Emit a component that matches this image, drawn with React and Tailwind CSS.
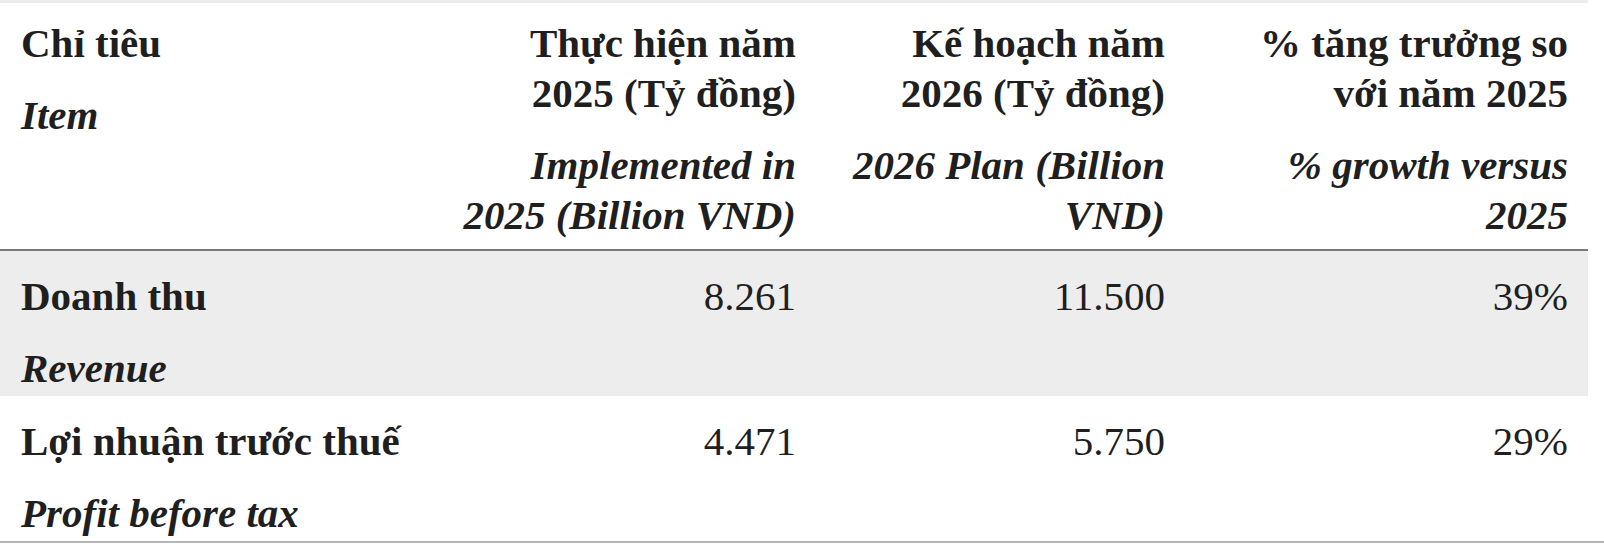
export default function App() {
  const rows = [
    { vi: 'Doanh thu', en: 'Revenue', a: '8.261', b: '11.500', c: '39%', shaded: true },
    { vi: 'Lợi nhuận trước thuế', en: 'Profit before tax', a: '4.471', b: '5.750', c: '29%', shaded: false },
  ];

  const cols = 'grid grid-cols-[420px_396px_369px_403px]';

  return (
    <div
      className="w-[1604px] h-[544px] bg-white text-[#1f1f1f] text-[41px] leading-[50px] overflow-hidden"
      style={{ fontFamily: '"Liberation Serif", "Times New Roman", serif' }}
    >
      <div className="w-[1588px] border-t-[3px] border-[#ececec]">
        {/* header */}
        <div className={`${cols} border-b-2 border-[#7a7a7a] pt-[15px] pb-[9px]`}>
          <div className="px-[21px]">
            <p className="font-bold">Chỉ tiêu</p>
            <p className="font-bold italic mt-[22px]">Item</p>
          </div>
          <div className="px-5 text-right whitespace-nowrap">
            <p className="font-bold">Thực hiện năm<br />2025 (Tỷ đồng)</p>
            <p className="font-bold italic mt-[22px]">Implemented in<br />2025 (Billion VND)</p>
          </div>
          <div className="px-5 text-right whitespace-nowrap">
            <p className="font-bold">Kế hoạch năm<br />2026 (Tỷ đồng)</p>
            <p className="font-bold italic mt-[22px]">2026 Plan (Billion<br />VND)</p>
          </div>
          <div className="px-5 text-right whitespace-nowrap">
            <p className="font-bold">% tăng trưởng so<br />với năm 2025</p>
            <p className="font-bold italic mt-[22px]">% growth versus<br />2025</p>
          </div>
        </div>

        {/* body */}
        {rows.map((r) => (
          <div
            key={r.vi}
            className={`${cols} h-[145px] pt-5 ${r.shaded ? 'bg-[#ededed]' : 'bg-white'}`}
          >
            <div className="px-[21px] whitespace-nowrap">
              <p className="font-bold">{r.vi}</p>
              <p className="font-bold italic mt-[22px]">{r.en}</p>
            </div>
            <div className="px-5 text-right">{r.a}</div>
            <div className="px-5 text-right">{r.b}</div>
            <div className="px-5 text-right">{r.c}</div>
          </div>
        ))}
      </div>
      <div className="w-full h-[2px] bg-[#b5b5b5]" />
    </div>
  );
}
